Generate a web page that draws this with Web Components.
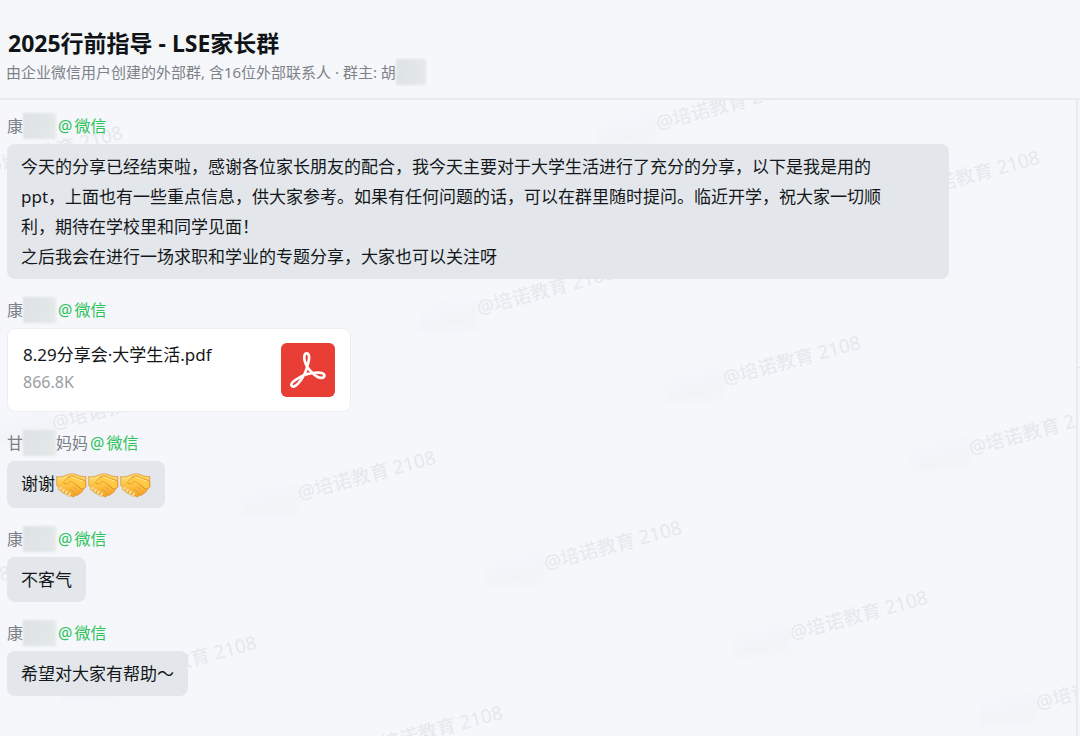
<!DOCTYPE html>
<html lang="zh-CN">
<head>
<meta charset="utf-8">
<title>2025行前指导 - LSE家长群</title>
<style>
  body {
    margin:0;
    background:#f5f7fb;
    color:#16191d;
    font-family:"Noto Sans", "Noto Sans CJK SC", sans-serif;
  }
</style>
</head>
<body>

<chat-window>
  <chat-header slot="header">
    2025行前指导 - LSE家长群
    <span slot="info">由企业微信用户创建的外部群, 含16位外部联系人 · 群主: 胡</span>
  </chat-header>

  <chat-message from="康">
    <chat-bubble wide>今天的分享已经结束啦，感谢各位家长朋友的配合，我今天主要对于大学生活进行了充分的分享，以下是我是用的ppt，上面也有一些重点信息，供大家参考。如果有任何问题的话，可以在群里随时提问。临近开学，祝大家一切顺利，期待在学校里和同学见面！<br>之后我会在进行一场求职和学业的专题分享，大家也可以关注呀</chat-bubble>
  </chat-message>
  <chat-message from="康">
    <file-card size="866.8K">8.29分享会·大学生活.pdf</file-card>
  </chat-message>
  <chat-message from="甘" suffix="妈妈">
    <chat-bubble>谢谢<hand-shake></hand-shake><hand-shake></hand-shake><hand-shake></hand-shake></chat-bubble>
  </chat-message>
  <chat-message from="康">
    <chat-bubble>不客气</chat-bubble>
  </chat-message>
  <chat-message from="康">
    <chat-bubble>希望对大家有帮助～</chat-bubble>
  </chat-message>
</chat-window>

<script>
const define = (name, html, setup = () => {}) => {
  customElements.define(name, class extends HTMLElement {
    connectedCallback() {
      if (this.shadowRoot) return;
      const shadow = this.attachShadow({mode: 'open'});
      shadow.innerHTML = html;
      setup(this, shadow);
    }
  });
};

// soft patch that covers the private part of a name
define('name-mask', //html
`
  <style>
    :host {
      display:block;
      flex:none;
      width:33px;
      height:26px;
      background:linear-gradient(100deg, #dfe2e5, #e1e6e6 60%, #e5ebe9);
      filter:blur(1px);
    }
  </style>
`);

define('chat-header', //html
`
  <style>
    :host {
      display:block;
      padding:25px 5px 15px;
      border-bottom:2px solid #e8eaee;
    }
    h1 {
      width:fit-content;
      margin:0;
      padding:0 5px 0 3px;
      background:#f5f6f7;
      font-size:23px;
      line-height:36px;
      font-weight:700;
      color:#101418;
    }
    .info {
      display:flex;
      align-items:center;
      padding-left:1px;
      font-size:15px;
      line-height:22px;
      color:#7d8288;
    }
    name-mask {
      width:30px;
      margin:-2px 0;
    }
  </style>
  <h1><slot></slot></h1>
  <div class="info"><slot name="info"></slot><name-mask></name-mask></div>
`);

define('chat-message', //html
`
  <style>
    :host {
      display:block;
    }
    .from {
      display:flex;
      align-items:center;
      height:24px;
      margin-bottom:6px;
      font-size:16px;
      line-height:24px;
      color:#7b8086;
    }
    .source {
      display:flex;
      gap:2px;
      margin-left:2px;
      color:#2fc25b;
    }
  </style>
  <div class="from">
    <span class="name"></span><name-mask></name-mask><span class="suffix"></span>
    <span class="source"><span>@</span><span>微信</span></span>
  </div>
  <slot></slot>
`, (el, shadow) => {
  shadow.querySelector('.name').textContent = el.getAttribute('from');
  shadow.querySelector('.suffix').textContent = el.getAttribute('suffix') || '';
});

define('chat-bubble', //html
`
  <style>
    :host {
      display:block;
      box-sizing:border-box;
      width:fit-content;
      max-width:calc(100% - 127px);
      padding:8px 14px 7px;
      border-radius:8px;
      background:#e3e7eb;
      font-size:17px;
      line-height:30px;
      color:#14171a;
    }
    :host([wide]) {
      padding-right:42px;
    }
  </style>
  <slot></slot>
`);

define('file-card', //html
`
  <style>
    :host {
      display:block;
      width:344px;
    }
    a {
      display:flex;
      justify-content:space-between;
      align-items:flex-start;
      padding:14px 15px;
      border:1px solid #eceef1;
      border-radius:8px;
      background:#fff;
      color:#14171a;
      text-decoration:none;
    }
    .name {
      font-size:17px;
      line-height:24px;
    }
    .size {
      font-size:16px;
      line-height:30px;
      color:#9a9da1;
    }
    svg {
      display:block;
      width:54px;
      height:54px;
    }
  </style>
  <a href="#">
    <div>
      <div class="name"><slot></slot></div>
      <div class="size"></div>
    </div>
    <svg viewBox="0 0 162 162" aria-hidden="true">
      <rect width="162" height="162" rx="17" fill="#e83e36"/>
      <path fill="none" stroke="#fff" stroke-width="8" stroke-linejoin="round" stroke-linecap="round"
        d="M77 31C70 31 68 43 71 53C74 69 91 91 110 102C119 107 130 105 130 98C130 90 117 88 106 89C87 90 67 96 51 106C39 113 29 121 31 127C34 134 44 130 51 122C65 107 78 81 83 54C86 42 84 31 77 31Z"/>
    </svg>
  </a>
`, (el, shadow) => {
  shadow.querySelector('.size').textContent = el.getAttribute('size');
});

define('hand-shake', //html
`
  <style>
    :host {
      display:inline-block;
      width:32px;
      height:32px;
      vertical-align:middle;
    }
    svg {
      display:block;
      width:32px;
      height:32px;
    }
  </style>
  <svg viewBox="-3 0 96 96" role="img" aria-label="握手">
    <defs>
      <linearGradient id="skin" x1="0" y1="0" x2="0" y2="1">
        <stop offset="0" stop-color="#ffdc69"/>
        <stop offset=".55" stop-color="#fdc03c"/>
        <stop offset="1" stop-color="#f79f25"/>
      </linearGradient>
    </defs>
    <g stroke="#d98a2a" stroke-width="2" stroke-linejoin="round" stroke-linecap="round">
      <path fill="url(#skin)" d="M3 23C13 25 21 23 29 19C39 14 53 13 64 18C73 22 82 24 89 22L90 53C86 57 83 60 80 64C80 70 75 73 71 72C69 78 64 80 60 78C56 84 50 85 45 81L36 76C29 78 26 74 26 71C20 73 16 69 16 65C9 65 7 60 9 56L3 50Z"/>
      <path fill="#ffc944" d="M38 24C46 19 55 21 64 27L88 35L89 54L78 61L58 45C52 41 47 38 43 37C39 42 31 47 24 44C21 42 24 38 28 34C31 30 34 26 38 24Z"/>
      <path fill="none" d="M58 47L78 62M51 53L71 71M45 61L60 77"/>
      <g fill="#ffdc83" stroke-width="1">
        <ellipse cx="14" cy="58" rx="5" ry="7" transform="rotate(32 14 58)"/>
        <ellipse cx="22" cy="64" rx="5" ry="8" transform="rotate(32 22 64)"/>
        <ellipse cx="31" cy="70" rx="5" ry="8" transform="rotate(32 31 70)"/>
        <ellipse cx="41" cy="76" rx="5" ry="7" transform="rotate(32 41 76)"/>
      </g>
    </g>
    <path fill="none" stroke="#ffe99b" stroke-width="3" stroke-linecap="round" d="M10 29C21 30 29 26 34 23M47 25C57 26 66 33 78 36"/>
  </svg>
`);

define('water-mark', //html
`
  <style>
    :host {
      position:absolute;
      inset:0;
      overflow:hidden;
      pointer-events:none;
      font-size:19px;
      line-height:26px;
      color:#e6e8ec;
    }
    .mark {
      position:absolute;
      white-space:nowrap;
    }
    .text {
      display:block;
      transform:rotate(-15deg);
      transform-origin:9px 13px;
    }
    .smudge {
      position:absolute;
      right:100%;
      top:6px;
      width:56px;
      height:32px;
      background:linear-gradient(165deg, transparent 15%, #f1f3f7 60%, #f3f5f9);
      filter:blur(2px);
    }
  </style>
`, (el, shadow) => {
  // slanted grid: one step goes right and down, the next row goes left and down
  for (let row = -1; row < 6; ++row) for (let col = -3; col < 6; ++col) {
    const x = 477 + col * 246 - row * 179;
    const y = 193 + col * 70 + row * 185;
    if (x < -140 || x > 1070 || y < -20 || y > 650) continue;
    const mark = document.createElement('div');
    mark.className = 'mark';
    mark.style.left = x + 'px';
    mark.style.top = y + 'px';
    mark.innerHTML = '<span class="smudge"></span><span class="text">@培诺教育 2108</span>';
    shadow.append(mark);
  }
});

define('chat-window', //html
`
  <style>
    :host {
      display:flex;
      flex-direction:column;
      min-height:100vh;
    }
    main {
      flex:1;
      display:flex;
    }
    .log {
      position:relative;
      flex:1;
      border-right:2px solid #e9ebef;
    }
    .messages {
      position:relative;
      display:flex;
      flex-direction:column;
      gap:19px;
      padding:14px 0 20px 7px;
    }
    aside {
      width:2px;
    }
    aside::before {
      content:"";
      display:block;
      height:267px;
      border-bottom:1px solid #e4e6ea;
    }
  </style>
  <slot name="header"></slot>
  <main>
    <div class="log">
      <water-mark></water-mark>
      <div class="messages"><slot></slot></div>
    </div>
    <aside></aside>
  </main>
`);
</script>
</body>
</html>
